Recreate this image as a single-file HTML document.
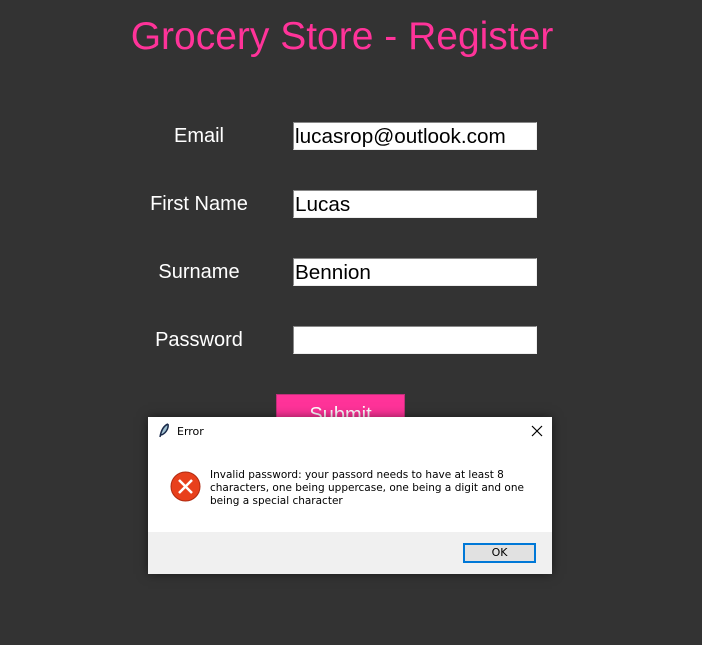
<!DOCTYPE html>
<html><head><style>
body{margin:0;width:702px;height:645px;background:#333333;position:relative;overflow:hidden;font-family:"Liberation Sans",Arial,sans-serif}
.a{position:absolute}
.t{left:0;width:684px;text-align:center;top:14px;color:#ff3399;font-size:39px;line-height:46px}
.l{color:#fff;font-size:20px;width:120px;text-align:center;left:139px;line-height:28px}
.e{left:293px;width:241px;height:26px;background:#fff;border:1px solid #888;border-right-color:#eee;border-bottom-color:#eee;font-size:20.7px;line-height:27px;padding-left:1px;color:#000;box-sizing:content-box}
.btn{left:276px;top:394px;width:127px;height:40px;background:#ff3399;border:1px solid #c0307a;color:#fff;font-size:20px;text-align:center;line-height:40px}
.dlg{left:148px;top:417px;width:404px;height:157px;background:#fff;box-shadow:0 0 10px rgba(0,0,0,.5);font-family:"DejaVu Sans",sans-serif}
.ft{left:0;top:115px;width:404px;height:42px;background:#f0f0f0}
.ok{left:315px;top:11px;width:69px;height:16px;border:2px solid #0078d7;background:#e1e1e1;font-size:11px;text-align:center;line-height:16px}
</style></head><body>
<div class="a t">Grocery Store - Register</div>
<div class="a l" style="top:122px">Email</div>
<div class="a l" style="top:190px">First Name</div>
<div class="a l" style="top:258px">Surname</div>
<div class="a l" style="top:326px">Password</div>
<div class="a e" style="top:122px">lucasrop@outlook.com</div>
<div class="a e" style="top:190px">Lucas</div>
<div class="a e" style="top:258px">Bennion</div>
<div class="a e" style="top:326px"></div>
<div class="a btn">Submit</div>
<div class="a dlg">
 <svg class="a" style="left:10px;top:6px" width="12" height="16" viewBox="0 0 12 16"><path d="M10 1C5 3 3 8 2 14M10 1C11 6 7 11 3 12" stroke="#1a2a4a" stroke-width="1.5" fill="#9bc"/></svg>
 <div class="a" style="left:29px;top:8px;font-size:11px">Error</div>
 <svg class="a" style="left:383px;top:8px" width="12" height="12"><path d="M1 1L11 11M11 1L1 11" stroke="#000" stroke-width="1.2"/></svg>
 <div class="a" style="left:62px;top:52px;width:335px;font-size:10.5px;line-height:13px">Invalid password: your passord needs to have at least 8 characters, one being uppercase, one being a digit and one being a special character</div>
 <svg class="a" style="left:22px;top:54px" width="31" height="31"><circle cx="15.5" cy="15.5" r="14.5" fill="#e8401c" stroke="#b02a10"/><path d="M9 9L22 22M22 9L9 22" stroke="#fff" stroke-width="2.5"/></svg>
 <div class="a ft"><div class="a ok">OK</div></div>
</div>
</body></html>
